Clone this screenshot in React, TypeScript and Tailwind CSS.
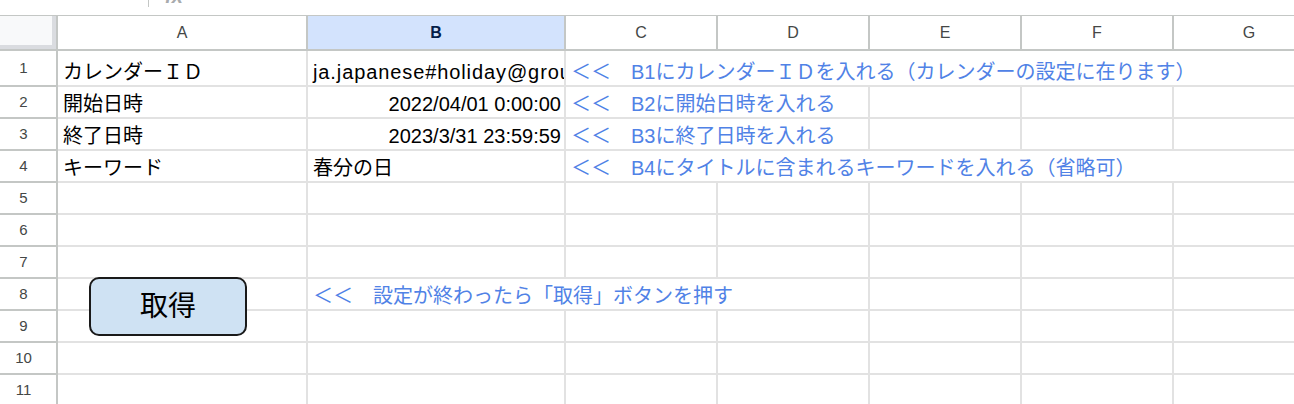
import React from 'react';

type Cell = {
  w: string;
  text?: string;
  right?: boolean;
  blue?: boolean;
  extra?: string;
};

const COLUMNS = [
  { key: 'A', w: 'w-[250px]' },
  { key: 'B', w: 'w-[258px]', selected: true },
  { key: 'C', w: 'w-[152px]' },
  { key: 'D', w: 'w-[152px]' },
  { key: 'E', w: 'w-[152px]' },
  { key: 'F', w: 'w-[152px]' },
  { key: 'G', w: 'w-[152px]' },
];

const plain: Cell[] = COLUMNS.map((c) => ({ w: c.w }));

const ROWS: { n: number; h: string; cells: Cell[] }[] = [
  {
    n: 1,
    h: 'h-[36px]',
    cells: [
      { w: 'w-[250px]', text: 'カレンダーＩＤ' },
      { w: 'w-[258px]', text: 'ja.japanese#holiday@group.v.calendar.google.com', extra: 'tracking-[0.9px]' },
      { w: 'w-[760px]', text: '＜＜　B1にカレンダーＩＤを入れる（カレンダーの設定に在ります）', blue: true },
    ],
  },
  {
    n: 2,
    h: 'h-[32px]',
    cells: [
      { w: 'w-[250px]', text: '開始日時' },
      { w: 'w-[258px]', text: '2022/04/01 0:00:00', right: true },
      { w: 'w-[304px]', text: '＜＜　B2に開始日時を入れる', blue: true },
      { w: 'w-[152px]' },
      { w: 'w-[152px]' },
      { w: 'w-[152px]' },
    ],
  },
  {
    n: 3,
    h: 'h-[32px]',
    cells: [
      { w: 'w-[250px]', text: '終了日時' },
      { w: 'w-[258px]', text: '2023/3/31 23:59:59', right: true },
      { w: 'w-[304px]', text: '＜＜　B3に終了日時を入れる', blue: true },
      { w: 'w-[152px]' },
      { w: 'w-[152px]' },
      { w: 'w-[152px]' },
    ],
  },
  {
    n: 4,
    h: 'h-[32px]',
    cells: [
      { w: 'w-[250px]', text: 'キーワード' },
      { w: 'w-[258px]', text: '春分の日' },
      { w: 'w-[760px]', text: '＜＜　B4にタイトルに含まれるキーワードを入れる（省略可）', blue: true },
    ],
  },
  { n: 5, h: 'h-[32px]', cells: plain },
  { n: 6, h: 'h-[32px]', cells: plain },
  { n: 7, h: 'h-[32px]', cells: plain },
  {
    n: 8,
    h: 'h-[32px]',
    cells: [
      { w: 'w-[250px]' },
      { w: 'w-[562px]', text: '＜＜　設定が終わったら「取得」ボタンを押す', blue: true },
      { w: 'w-[152px]' },
      { w: 'w-[152px]' },
      { w: 'w-[152px]' },
    ],
  },
  { n: 9, h: 'h-[32px]', cells: plain },
  { n: 10, h: 'h-[32px]', cells: plain },
  { n: 11, h: 'h-[32px]', cells: plain },
];

function HeaderRow() {
  return (
    <div className="flex h-[36px] border-t border-[#c4c7c5]">
      {/* corner */}
      <div className="w-[58px] shrink-0 border-r-2 border-b-2 border-[#c4c7c5]">
        <div className="h-full w-full bg-[#f8f9fa] border-r-[4px] border-b-[4px] border-[#dadce0]" />
      </div>
      {COLUMNS.map((col) => (
        <div
          key={col.key}
          className={`${col.w} shrink-0 flex items-center justify-center border-r-2 border-b-2 border-[#c4c7c5] text-[16px] ${
            col.selected ? 'bg-[#d3e3fd] font-bold text-[#041e49]' : 'bg-white text-[#444746]'
          }`}
        >
          {col.key}
        </div>
      ))}
    </div>
  );
}

export default function App() {
  return (
    <div className="relative w-[1294px] h-[404px] overflow-hidden bg-white font-['Liberation_Sans','Noto_Sans_CJK_JP',sans-serif]">
      {/* formula bar remnant */}
      <div className="flex items-start h-[15px] overflow-hidden">
        <div className="ml-[148px] w-px h-[7px] bg-[#c4c7c5]" />
        <span className="ml-[16px] -mt-[14px] text-[20px] font-bold italic text-[#a8abae] leading-[20px]">fx</span>
      </div>

      <HeaderRow />

      {ROWS.map((row) => (
        <div key={row.n} className={`flex ${row.h}`}>
          <div className="w-[58px] shrink-0 flex items-center justify-center pr-[9px] border-r-2 border-b-2 border-[#c4c7c5] text-[15px] text-[#444746]">
            {row.n}
          </div>
          {row.cells.map((cell, i) => (
            <div
              key={i}
              className={`${cell.w} shrink-0 flex items-end pb-[1px] overflow-hidden whitespace-nowrap border-r-2 border-b-2 border-[#e2e2e2] text-[20px] leading-[24px] ${
                cell.right ? 'justify-end pr-[3px] pl-[5px]' : 'pl-[5px]'
              } ${cell.blue ? 'text-[#5082e6]' : 'text-black'} ${cell.extra ?? ''}`}
            >
              {cell.text}
            </div>
          ))}
        </div>
      ))}

      {/* drawing: 取得 button */}
      <div className="absolute left-[89px] top-[277px] w-[158px] h-[59px] rounded-[10px] border-2 border-[#1a1a1a] bg-[#cfe2f3] flex items-center justify-center text-[28px] text-black">
        取得
      </div>
    </div>
  );
}
